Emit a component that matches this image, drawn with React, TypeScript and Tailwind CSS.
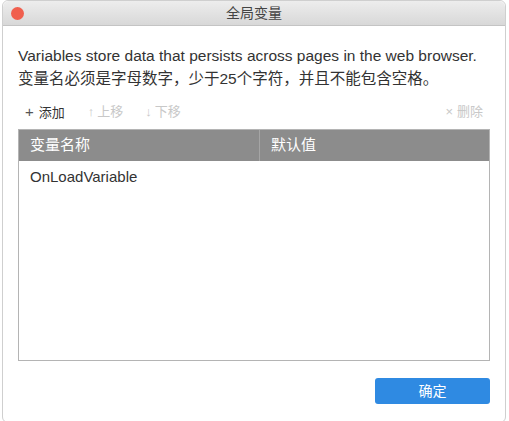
export default function App() {
  const font = { fontFamily: '"Liberation Sans", "Noto Sans CJK SC", sans-serif' };
  return (
    <div className="h-[421px] w-[509px] overflow-hidden bg-white" style={font}>
      <div className="ml-[2px] flex h-[423px] w-[504px] flex-col rounded-[6px] border border-[#cfcfcf] bg-white">
        {/* title bar */}
        <div className="relative flex h-[25px] shrink-0 items-center justify-center rounded-t-[6px] border-b border-[#c4c4c4] bg-gradient-to-b from-[#ededed] to-[#d8d8d8]">
          <span className="absolute left-[8px] top-[6px] h-[13px] w-[13px] rounded-full bg-[#f05f4e]" />
          <span className="text-[14px] text-[#444]">全局变量</span>
        </div>

        <div className="flex flex-1 flex-col px-[15px] pt-[18px]">
          <p className="text-[15.5px] leading-[23px] text-[#333]">
            Variables store data that persists across pages in the web browser.
          </p>
          <p className="text-[15.5px] leading-[23px] text-[#333]">
            变量名必须是字母数字，少于25个字符，并且不能包含空格。
          </p>

          <div className="mt-[12px] flex h-[20px] items-center text-[13px]">
            <span className="ml-[7px] text-[#333]">
              <span className="mr-[5px] text-[15px] font-light text-[#555]">+</span>添加
            </span>
            <span className="ml-[23px] text-[#c8c8c8]">
              <span className="mr-[3px]">↑</span>上移
            </span>
            <span className="ml-[22px] text-[#c8c8c8]">
              <span className="mr-[3px]">↓</span>下移
            </span>
            <span className="ml-auto mr-[7px] text-[#c8c8c8]">
              <span className="mr-[4px]">×</span>删除
            </span>
          </div>

          <div className="mt-[7px] flex h-[232px] flex-col border border-[#b4b4b4]">
            <div className="flex h-[31px] items-center bg-[#8c8c8c] text-[15px] text-white">
              <div className="flex h-full w-[241px] items-center border-r border-[#a5a5a5] pl-[11px]">
                变量名称
              </div>
              <div className="pl-[11px]">默认值</div>
            </div>
            <div className="flex h-[32px] items-center pl-[11px] text-[15px] text-[#333]">
              OnLoadVariable
            </div>
          </div>

          <div className="mt-[17px] flex justify-end">
            <button className="h-[26px] w-[115px] rounded-[3px] bg-[#2f8ae2] text-[14px] text-white">
              确定
            </button>
          </div>
        </div>
      </div>
    </div>
  );
}
